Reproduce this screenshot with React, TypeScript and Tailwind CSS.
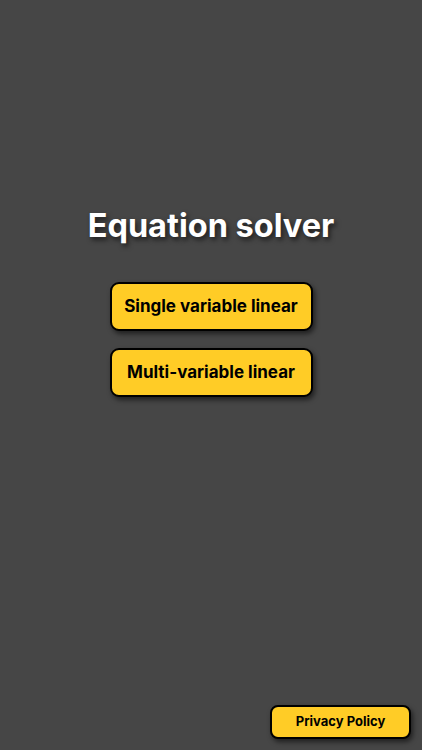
export default function App() {
  const font = { fontFamily: 'Inter, "Noto Sans", sans-serif' }
  const btn =
    'w-[203px] h-[49px] rounded-[9px] border-2 border-black bg-[#FFCC26] text-black text-[17px] font-bold shadow-[2px_3px_5px_rgba(0,0,0,0.55)] flex items-center justify-center'

  return (
    <div className="w-[422px] h-[750px] bg-[#464646] flex flex-col items-center" style={font}>
      <h1 className="mt-[206px] text-[32.5px] leading-[40px] font-bold text-white [text-shadow:2px_3px_5px_rgba(0,0,0,0.6)]">
        Equation solver
      </h1>
      <div className="mt-[36px] flex flex-col gap-[17px]">
        <button className={btn}>Single variable linear</button>
        <button className={btn}>Multi-variable linear</button>
      </div>
      <div className="mt-auto mb-[11px] self-end mr-[11px]">
        <button className="w-[141px] h-[34px] rounded-[8px] border-2 border-black bg-[#FFCC26] text-black text-[13px] font-bold shadow-[2px_3px_5px_rgba(0,0,0,0.55)]">
          Privacy Policy
        </button>
      </div>
    </div>
  )
}
